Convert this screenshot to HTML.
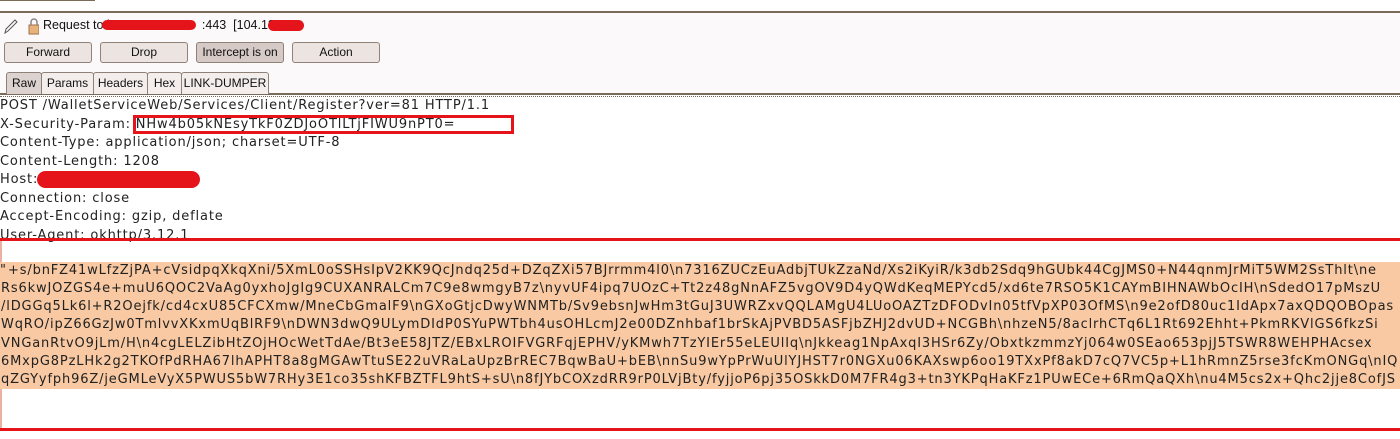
<!DOCTYPE html>
<html><head><meta charset="utf-8"><style>
body{margin:0;width:1400px;height:439px;overflow:hidden;background:#fff;position:relative;font-family:"DejaVu Sans","Liberation Sans",sans-serif}
.a{position:absolute}
.tb{left:0;top:11px;width:1400px;height:82px;background:#fbf9f9;border-top:2px solid #7a6a5a}
.btn{position:absolute;top:42px;height:19px;width:86px;border:1px solid #8f8078;border-radius:3px;background:#ebe4e1;font:12px "Liberation Sans",sans-serif;text-align:center;line-height:19px;color:#111}
.tab{position:absolute;top:72px;height:21px;border:1px solid #8f8078;border-bottom:none;border-radius:3px 3px 0 0;background:#f3eeec;font:12px "Liberation Sans",sans-serif;text-align:center;line-height:21px;color:#111}
.l{position:absolute;left:0;font-size:13px;letter-spacing:0.85px;color:#222;white-space:nowrap;line-height:18px}
.b{position:absolute;left:0;width:1400px;height:18.15px;background:#f8c9a2;font-size:13px;letter-spacing:0.85px;color:#222;white-space:nowrap;overflow:hidden;line-height:18px;padding-left:1px;box-sizing:border-box}
.r{background:#e5141a;border-radius:9px}
</style></head><body>
<div class="a" style="left:0;top:0;width:95px;height:1px;background:#7a6a5a"></div>
<div class="a tb"></div>
<div class="a" style="left:0;top:93px;width:1400px;height:2px;background:#7a6a5a"></div>
<div class="a" style="left:0;top:95px;width:1400px;height:1px;border-bottom:1px dotted #7a6a5a"></div>
<svg class="a" style="left:3px;top:17px" width="36" height="18" viewBox="0 0 36 18"><path d="M2 16 L3 12 L12 3 L14 5 L5 14 Z" fill="none" stroke="#555" stroke-width="1"/><rect x="26" y="8" width="10" height="9" fill="#e8b27a" stroke="#a07050"/><path d="M28 8 V5 a3 3 0 0 1 6 0 V8" fill="none" stroke="#888" stroke-width="1.5"/></svg>
<div class="a" style="left:43px;top:18px;font:12.5px 'Liberation Sans',sans-serif;color:#111">Request to h<span style="display:inline-block;width:88px"></span>:443&nbsp; [104.130</div>
<div class="a r" style="left:102px;top:20px;width:94px;height:10px;border-radius:5px"></div>
<div class="a r" style="left:268px;top:20px;width:36px;height:11px;border-radius:6px"></div>
<div class="btn" style="left:4px">Forward</div>
<div class="btn" style="left:100px">Drop</div>
<div class="btn" style="left:196px;background:#d6cac6">Intercept is on</div>
<div class="btn" style="left:292px">Action</div>
<div class="tab" style="left:6px;width:34px;background:#dcd2cf">Raw</div>
<div class="tab" style="left:41px;width:51px">Params</div>
<div class="tab" style="left:93px;width:53px">Headers</div>
<div class="tab" style="left:147px;width:33px">Hex</div>
<div class="tab" style="left:181px;width:86px">LINK-DUMPER</div>
<div class="l" style="top:97px">POST /WalletServiceWeb/Services/Client/Register?ver=81 HTTP/1.1</div>
<div class="l" style="top:115.5px">X-Security-Param: NHw4b05kNEsyTkF0ZDJoOTlLTjFIWU9nPT0=</div>
<div class="a" style="left:133px;top:115px;width:375px;height:13px;border:3px solid #e5141a"></div>
<div class="l" style="top:134px">Content-Type: application/json; charset=UTF-8</div>
<div class="l" style="top:152.5px">Content-Length: 1208</div>
<div class="l" style="top:171px">Host:</div>
<div class="a r" style="left:37px;top:171px;width:163px;height:17px"></div>
<div class="l" style="top:189.5px">Connection: close</div>
<div class="l" style="top:208px">Accept-Encoding: gzip, deflate</div>
<div class="l" style="top:226.5px">User-Agent: okhttp/3.12.1</div>
<div class="a" style="left:0;top:238px;width:1400px;height:3px;background:#e5141a"></div>
<div class="a" style="left:0;top:241px;width:2px;height:188px;background:#eab0a0"></div>
<div class="a" style="left:0;top:428px;width:1400px;height:3px;background:#e5141a"></div>
<div class="l" style="top:262px;z-index:2">"</div>
<div class="b" style="top:262px;padding-left:8px">+s/bnFZ41wLfzZjPA+cVsidpqXkqXni/5XmL0oSSHsIpV2KK9QcJndq25d+DZqZXi57BJrrmm4l0\n7316ZUCzEuAdbjTUkZzaNd/Xs2iKyiR/k3db2Sdq9hGUbk44CgJMS0+N44qnmJrMiT5WM2SsThlt\ne</div>
<div class="b" style="top:280.15px">Rs6kwJOZGS4e+muU6QOC2VaAg0yxhoJgIg9CUXANRALCm7C9e8wmgyB7z\nyvUF4ipq7UOzC+Tt2z48gNnAFZ5vgOV9D4yQWdKeqMEPYcd5/xd6te7RSO5K1CAYmBIHNAWbOcIH\nSdedO17pMszU</div>
<div class="b" style="top:298.3px">/lDGGq5Lk6l+R2Oejfk/cd4cxU85CFCXmw/MneCbGmalF9\nGXoGtjcDwyWNMTb/Sv9ebsnJwHm3tGuJ3UWRZxvQQLAMgU4LUoOAZTzDFODvIn05tfVpXP03OfMS\n9e2ofD80uc1IdApx7axQDQOBOpas</div>
<div class="b" style="top:316.45px">WqRO/ipZ66GzJw0TmlvvXKxmUqBlRF9\nDWN3dwQ9ULymDIdP0SYuPWTbh4usOHLcmJ2e00DZnhbaf1brSkAjPVBD5ASFjbZHJ2dvUD+NCGBh\nhzeN5/8aclrhCTq6L1Rt692Ehht+PkmRKVlGS6fkzSi</div>
<div class="b" style="top:334.6px">VNGanRtvO9jLm/H\n4cgLELZibHtZOjHOcWetTdAe/Bt3eE58JTZ/EBxLROIFVGRFqjEPHV/yKMwh7TzYIEr55eLEUlIq\nJkkeag1NpAxqI3HSr6Zy/ObxtkzmmzYj064w0SEao653pjJ5TSWR8WEHPHAcsex</div>
<div class="b" style="top:352.75px">6MxpG8PzLHk2g2TKOfPdRHA67lhAPHT8a8gMGAwTtuSE22uVRaLaUpzBrREC7BqwBaU+bEB\nnSu9wYpPrWuUlYJHST7r0NGXu06KAXswp6oo19TXxPf8akD7cQ7VC5p+L1hRmnZ5rse3fcKmONGq\nIQ</div>
<div class="b" style="top:370.9px">qZGYyfph96Z/jeGMLeVyX5PWUS5bW7RHy3E1co35shKFBZTFL9htS+sU\n8fJYbCOXzdRR9rP0LVjBty/fyjjoP6pj35OSkkD0M7FR4g3+tn3YKPqHaKFz1PUwECe+6RmQaQXh\nu4M5cs2x+Qhc2jje8CofJS</div>
</body></html>
